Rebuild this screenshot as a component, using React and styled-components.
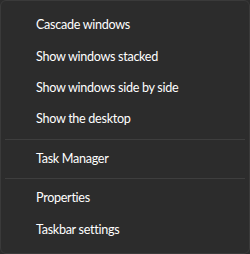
import React from "react";
import styled, { createGlobalStyle } from "styled-components";

const GlobalStyle = createGlobalStyle`
  html, body {
    margin: 0;
    padding: 0;
    background: #2c2c2c;
  }
`;

const Menu = styled.div`
  box-sizing: border-box;
  width: 250px;
  height: 254px;
  padding: 8px 4px;
  background: #2c2c2c;
  border: 1px solid #3a3a3a;
  border-radius: 6px;
  display: flex;
  flex-direction: column;
  font-family: Lato, "Noto Sans", sans-serif;
`;

const Item = styled.div`
  height: 31.5px;
  display: flex;
  align-items: center;
  padding-left: 31px;
  font-size: 12.6px;
  letter-spacing: -0.3px;
  color: #ffffff;
  white-space: nowrap;
`;

const Separator = styled.div`
  height: 1px;
  margin: 4px 0 3px;
  background: #3e3e3e;
`;

const groups = [
  ["Cascade windows", "Show windows stacked", "Show windows side by side", "Show the desktop"],
  ["Task Manager"],
  ["Properties", "Taskbar settings"],
];

export default function App() {
  return (
    <>
      <GlobalStyle />
      <Menu>
        {groups.map((group, i) => (
          <React.Fragment key={i}>
            {i > 0 && <Separator />}
            {group.map((label) => (
              <Item key={label}>{label}</Item>
            ))}
          </React.Fragment>
        ))}
      </Menu>
    </>
  );
}
